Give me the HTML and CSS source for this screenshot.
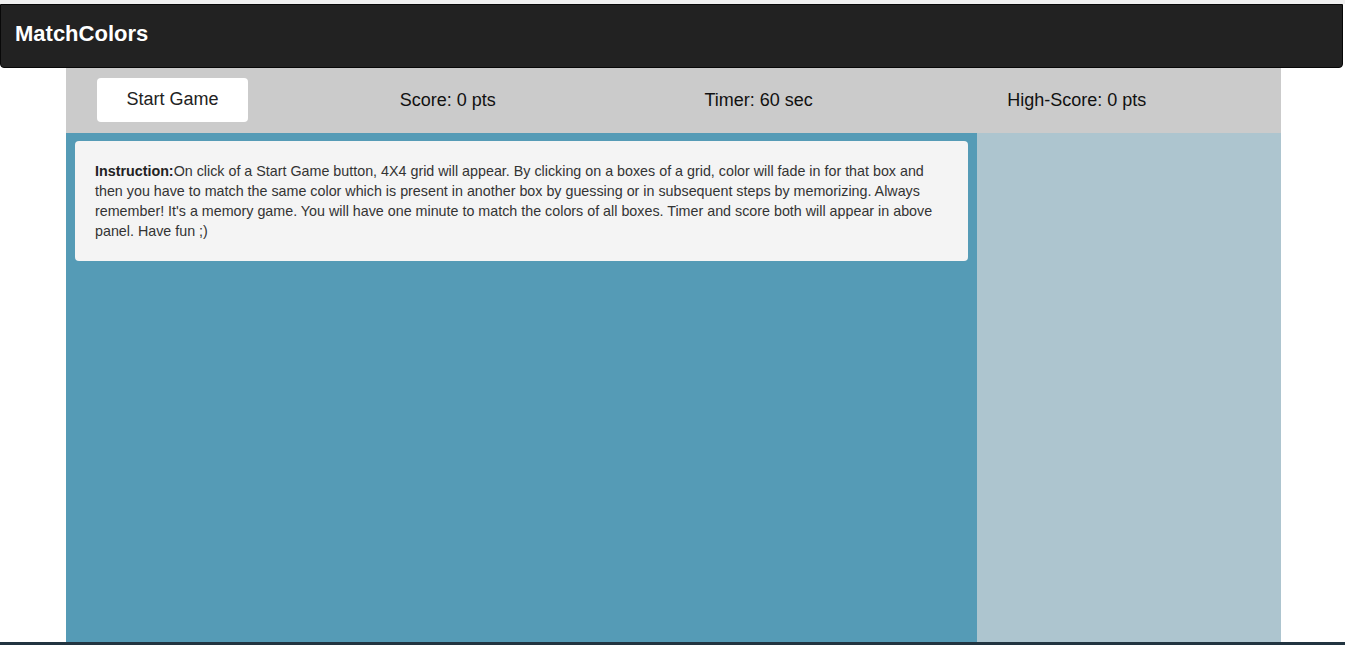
FILE: index.html
```html
<!DOCTYPE html>
<html>
<head>
<meta charset="utf-8">
<title>MatchColors</title>
<link rel="stylesheet" href="styles.css">
</head>
<body>
<div class="topstrip"></div>
<nav class="navbar"><span class="brand">MatchColors</span></nav>
<div class="container">
  <div class="panel">
    <div class="cell"><button class="start-btn">Start Game</button></div>
    <div class="cell"><span class="stat">Score: 0 pts</span></div>
    <div class="cell"><span class="stat">Timer: 60 sec</span></div>
    <div class="cell"><span class="stat">High-Score: 0 pts</span></div>
  </div>
  <div class="main">
    <div class="board">
      <div class="instruction"><b>Instruction:</b>On click of a Start Game button, 4X4 grid will appear. By clicking on a boxes of a grid, color will fade in for that box and then you have to match the same color which is present in another box by guessing or in subsequent steps by memorizing. Always remember! It's a memory game. You will have one minute to match the colors of all boxes. Timer and score both will appear in above panel. Have fun ;)</div>
    </div>
    <div class="side"></div>
  </div>
</div>
<div class="bottomline"></div>
</body>
</html>
```
FILE: styles.css
```css
html, body {
  margin: 0;
  padding: 0;
  background: #ffffff;
  font-family: "Liberation Sans", Arial, Helvetica, sans-serif;
  overflow: hidden;
}
.topstrip {
  height: 4px;
  background: #f0f0f0;
}
.navbar {
  box-sizing: border-box;
  height: 64px;
  margin-right: 2px;
  background: #222222;
  border: 1px solid #080808;
  border-radius: 0 0 4px 4px;
  display: flex;
  align-items: center;
  padding-left: 14px;
  padding-bottom: 4px;
}
.brand {
  color: #ffffff;
  font-weight: bold;
  font-size: 22px;
}
.container {
  width: 1215px;
  margin-left: 66px;
}
.panel {
  height: 65px;
  background: #cbcbcb;
  display: grid;
  grid-template-columns: repeat(4, 1fr);
  align-items: center;
}
.cell {
  padding-left: 31px;
  display: flex;
  align-items: center;
}
.cell:nth-child(2), .cell:nth-child(4) {
  padding-left: 30px;
}
.start-btn {
  height: 44px;
  width: 151px;
  margin-top: -2px;
  background: #ffffff;
  border: none;
  border-radius: 4px;
  font-family: "Liberation Sans", Arial, sans-serif;
  font-size: 18px;
  color: #222;
  padding: 0;
}
.stat {
  font-size: 18px;
  color: #111;
}
.main {
  display: grid;
  grid-template-columns: 911px 304px;
  height: 509px;
}
.board {
  background: #559bb6;
  padding: 8px 9px;
}
.side {
  background: #adc5cf;
}
.instruction {
  background: #f4f4f4;
  border-radius: 4px;
  padding: 20px 20px 20px 20px;
  font-size: 14.3px;
  line-height: 20px;
  color: #333333;
}
.instruction b {
  color: #222;
}
.bottomline {
  height: 3px;
  background: #223440;
}
```
